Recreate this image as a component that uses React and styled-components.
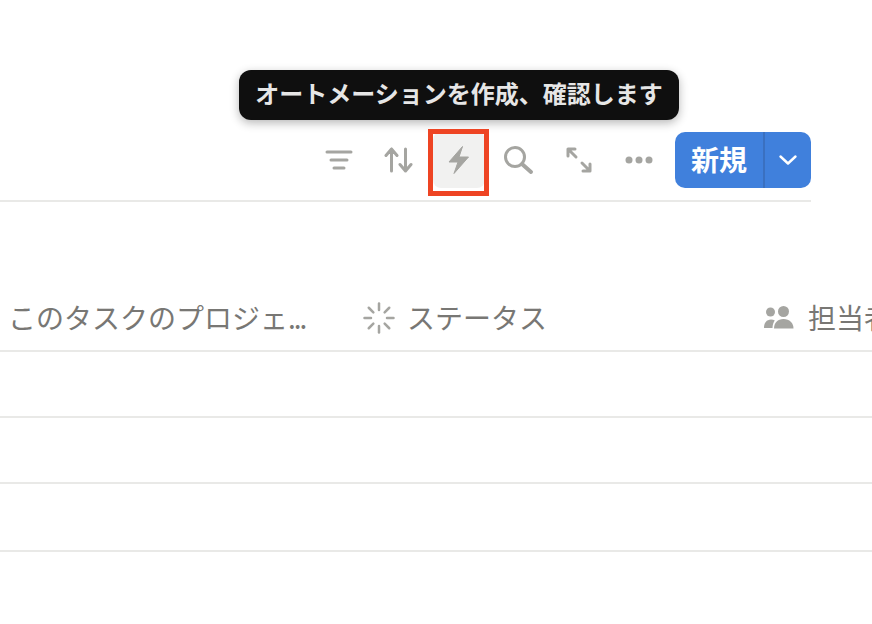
import React from 'react';
import styled, { createGlobalStyle } from 'styled-components';

const GlobalStyle = createGlobalStyle`
  html, body {
    margin: 0;
    background: #fff;
    overflow: hidden;
  }
  body {
    font-family: "Noto Sans CJK JP", "Noto Sans", sans-serif;
  }
`;

const Page = styled.div`
  width: 872px;
  height: 624px;
  padding-top: 132px;
  box-sizing: border-box;
  overflow: hidden;
`;

const Toolbar = styled.div`
  position: relative;
  width: 811px;
  height: 70px;
  padding-bottom: 12px;
  box-sizing: border-box;
  border-bottom: 2px solid #e9e9e7;
  display: flex;
  justify-content: flex-end;
`;

const Tooltip = styled.div`
  position: absolute;
  left: 239px;
  top: -62px;
  width: 440px;
  height: 50px;
  padding-bottom: 5px;
  box-sizing: border-box;
  display: flex;
  align-items: center;
  justify-content: center;
  background: #0f0f0f;
  color: #e6e6e6;
  border-radius: 12px;
  font-size: 24px;
  font-weight: 600;
  white-space: nowrap;
  box-shadow: 0 3px 10px rgba(15, 15, 15, 0.3);
`;

const IconSlot = styled.div`
  position: relative;
  width: 60px;
  display: flex;
  align-items: center;
  justify-content: center;
`;

const IconButton = styled.div`
  width: 52px;
  height: 56px;
  display: flex;
  align-items: center;
  justify-content: center;
  border-radius: 8px;
  background: ${(p) => (p.$active ? '#f1f1f0' : 'transparent')};
`;

const Highlight = styled.div`
  position: absolute;
  left: -1px;
  top: -3px;
  width: 61px;
  height: 67px;
  box-sizing: border-box;
  border: 5px solid #ee4423;
`;

const NewButton = styled.div`
  margin-left: 6px;
  width: 136px;
  height: 56px;
  display: flex;
  border-radius: 10px;
  overflow: hidden;
  background: #4080dc;
  color: #fff;
`;

const NewLabel = styled.div`
  width: 90px;
  padding-bottom: 2px;
  display: flex;
  align-items: center;
  justify-content: center;
  font-size: 28px;
  font-weight: 700;
  border-right: 2px solid #3a70c0;
  box-sizing: border-box;
`;

const NewArrow = styled.div`
  flex: 1;
  display: flex;
  align-items: center;
  justify-content: center;
`;

const HeaderRow = styled.div`
  margin-top: 84px;
  height: 66px;
  box-sizing: border-box;
  border-bottom: 2px solid #e9e9e7;
  display: flex;
  align-items: center;
  width: 900px;
`;

const Column = styled.div`
  flex: none;
  width: ${(p) => p.$width}px;
  padding-left: ${(p) => p.$pad}px;
  box-sizing: border-box;
  display: flex;
  align-items: center;
  gap: ${(p) => p.$gap || 0}px;
`;

const Label = styled.span`
  color: #787774;
  font-size: 28px;
  font-weight: 400;
  white-space: nowrap;
  padding-bottom: 3px;
`;

const Dots = styled.span`
  letter-spacing: -2px;
`;

const Row = styled.div`
  height: ${(p) => p.$height}px;
  box-sizing: border-box;
  border-bottom: 2px solid #e9e9e7;
`;

const grey = '#a5a5a1';

const Line = (props) => <line stroke={grey} strokeWidth="3" strokeLinecap="round" fill="none" {...props} />;

const FilterIcon = () => (
  <svg width="30" height="30" viewBox="0 0 30 30">
    <Line x1="3" y1="7" x2="27" y2="7" />
    <Line x1="7" y1="15" x2="23" y2="15" />
    <Line x1="10" y1="23" x2="20" y2="23" />
  </svg>
);

const SortIcon = () => (
  <svg width="30" height="30" viewBox="0 0 30 30">
    <path d="M7.500 26V4M2 10.500L7.500 4l5.500 6.500M21.500 4v22M16 19.500L21.500 26l5.500-6.500" stroke={grey} strokeWidth="3" strokeLinecap="round" strokeLinejoin="round" fill="none" />
  </svg>
);

const BoltIcon = () => (
  <svg width="30" height="30" viewBox="0 0 30 30">
    <path d="M18.500 1.500L5 17h9L10 28.500l14.500-16.500H15z" fill={grey} stroke={grey} strokeWidth="1" strokeLinejoin="round" />
  </svg>
);

const SearchIcon = () => (
  <svg width="30" height="30" viewBox="0 0 30 30">
    <circle cx="11" cy="12" r="9.500" stroke={grey} strokeWidth="3" fill="none" />
    <Line x1="18" y1="19" x2="27" y2="27" strokeWidth="4" />
  </svg>
);

const ExpandIcon = () => (
  <svg width="30" height="30" viewBox="0 0 30 30">
    <path d="M4 11V4h7M4 4l8 8M26 19v7h-7M26 26l-8-8" stroke={grey} strokeWidth="3" strokeLinecap="round" strokeLinejoin="round" fill="none" />
  </svg>
);

const MoreIcon = () => (
  <svg width="30" height="30" viewBox="0 0 30 30">
    <circle cx="5" cy="15" r="3.500" fill={grey} />
    <circle cx="15" cy="15" r="3.500" fill={grey} />
    <circle cx="25" cy="15" r="3.500" fill={grey} />
  </svg>
);

const ChevronIcon = () => (
  <svg width="20" height="12" viewBox="0 0 20 12">
    <path d="M2.500 2.500L10 9.500l7.500-7" stroke="#fff" strokeWidth="2.400" strokeLinecap="round" strokeLinejoin="round" fill="none" />
  </svg>
);

const StatusIcon = () => (
  <svg width="32" height="32" viewBox="0 0 32 32">
    {[0, 45, 90, 135, 180, 225, 270, 315].map((deg) => (
      <line key={deg} x1="16" y1="1.500" x2="16" y2="8" stroke={grey} strokeWidth="2.500" strokeLinecap="round" transform={`rotate(${deg} 16 16)`} />
    ))}
  </svg>
);

const PeopleIcon = () => (
  <svg width="32" height="24" viewBox="0 0 32 24">
    <circle cx="7.500" cy="6" r="4.500" fill={grey} />
    <circle cx="20.500" cy="5.500" r="5.500" fill={grey} />
    <path d="M1 22c0-5 2.500-8.500 7-8.500 1.500 0 2.800.4 3.800 1-1.400 1.800-2.200 4.400-2.300 7.500z" fill={grey} />
    <path d="M11 22.500c0-5.500 3.500-9.500 9.500-9.500s10 4 10 9.500z" fill={grey} />
  </svg>
);

const icons = [
  { id: 'filter', icon: <FilterIcon /> },
  { id: 'sort', icon: <SortIcon /> },
  { id: 'bolt', icon: <BoltIcon />, active: true },
  { id: 'search', icon: <SearchIcon /> },
  { id: 'expand', icon: <ExpandIcon /> },
  { id: 'more', icon: <MoreIcon /> },
];

export default function App() {
  return (
    <Page>
      <GlobalStyle />
      <Toolbar>
        <Tooltip>オートメーションを作成、確認します</Tooltip>
        {icons.map((item) => (
          <IconSlot key={item.id}>
            <IconButton $active={item.active}>{item.icon}</IconButton>
            {item.active && <Highlight />}
          </IconSlot>
        ))}
        <NewButton>
          <NewLabel>新規</NewLabel>
          <NewArrow>
            <ChevronIcon />
          </NewArrow>
        </NewButton>
      </Toolbar>
      <HeaderRow>
        <Column $width={363} $pad={8}>
          <Label>このタスクのプロジェ<Dots>...</Dots></Label>
        </Column>
        <Column $width={400} $pad={0} $gap={12}>
          <StatusIcon />
          <Label>ステータス</Label>
        </Column>
        <Column $width={137} $pad={0} $gap={13}>
          <PeopleIcon />
          <Label>担当者</Label>
        </Column>
      </HeaderRow>
      <Row $height={66} />
      <Row $height={66} />
      <Row $height={68} />
    </Page>
  );
}
